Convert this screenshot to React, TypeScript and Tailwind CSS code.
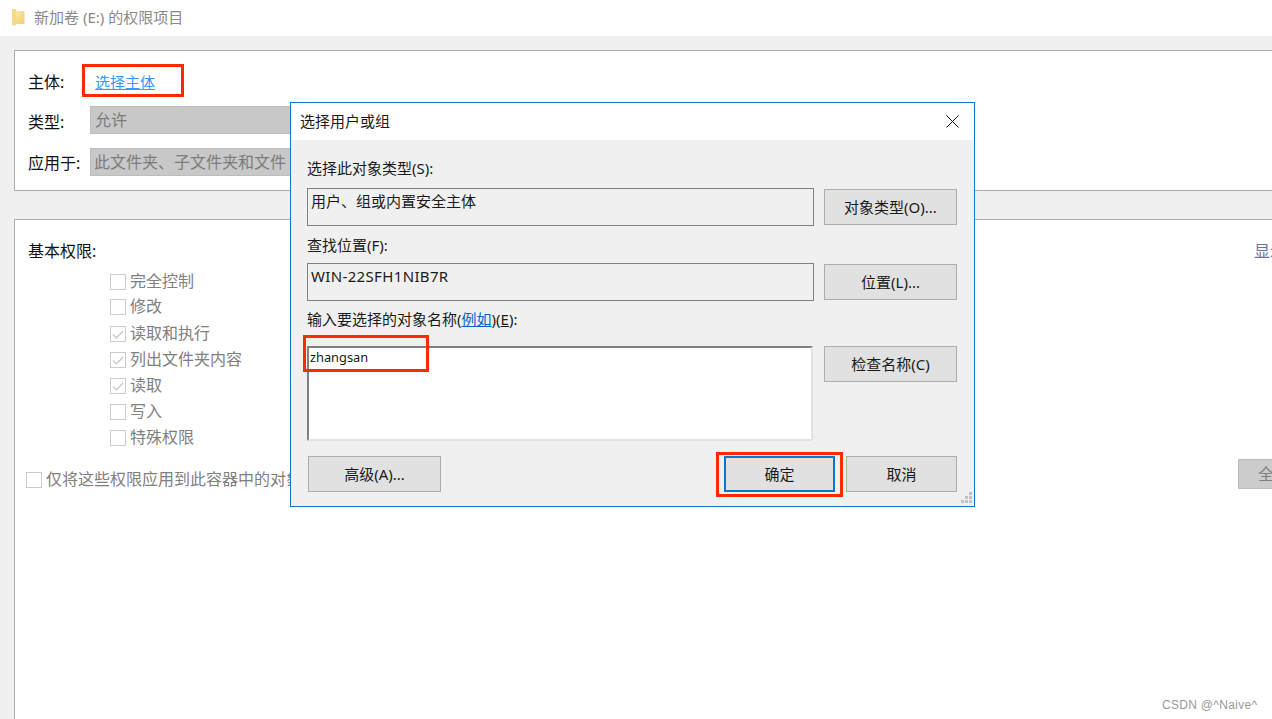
const font = { fontFamily: '"Noto Sans", "Noto Sans CJK SC", sans-serif' };

const perms = [
  { label: "完全控制", checked: false, cls: "h-[25px]" },
  { label: "修改", checked: false, cls: "h-[27px]" },
  { label: "读取和执行", checked: true, cls: "h-[26px]" },
  { label: "列出文件夹内容", checked: true, cls: "h-[26px]" },
  { label: "读取", checked: true, cls: "h-[26px]" },
  { label: "写入", checked: false, cls: "h-[26px]" },
  { label: "特殊权限", checked: false, cls: "h-[26px]" },
];

function CheckBox({ checked }: { checked?: boolean }) {
  return (
    <span className="flex h-4 w-4 shrink-0 items-center justify-center border border-[#cccccc] bg-white">
      {checked && (
        <svg width="14" height="14" viewBox="0 0 14 14" fill="none" stroke="#c4c4c4" strokeWidth="1.2">
          <polyline points="2,7.5 5.5,11 12,4" />
        </svg>
      )}
    </span>
  );
}

function Btn({ children, className = "border border-[#adadad]" }: { children: React.ReactNode; className?: string }) {
  return (
    <button className={`flex h-9 shrink-0 items-center justify-center bg-[#e1e1e1] text-[15px] text-[#1a1a1a] ${className}`}>
      {children}
    </button>
  );
}

function FolderIcon() {
  return (
    <svg width="14" height="18" viewBox="0 0 14 18">
      <defs>
        <linearGradient id="fold" x1="0" y1="0" x2="1" y2="1">
          <stop offset="0" stopColor="#fdeeb8" />
          <stop offset="1" stopColor="#f0cb6a" />
        </linearGradient>
      </defs>
      <path d="M1 1h4.500v2H12.500q1 0 1 1v11q0 1-1 1H5l-1 1.500H2.500L1 16z" fill="url(#fold)" />
      <path d="M1 1h4v15.500L3 17.500 1 16z" fill="#f7d98a" />
    </svg>
  );
}

function Dialog() {
  return (
    <div className="absolute left-[290px] top-[102px] flex h-[405px] w-[685px] flex-col border border-[#0a7ad6] bg-[#f0f0f0] text-[15px] text-[#1a1a1a]">
      <div className="flex h-[37px] shrink-0 items-center justify-between bg-white pl-[9px] pr-[15px]">
        <span>选择用户或组</span>
        <svg width="13" height="13" viewBox="0 0 13 13" stroke="#111" strokeWidth="1" fill="none">
          <path d="M0.500 0.500 12.500 12.500M12.500 0.500 0.500 12.500" />
        </svg>
      </div>
      <div className="relative flex flex-1 flex-col pl-[16px] pr-[17px] pt-[18px]">
        <div className="mb-[10px] h-5 leading-5">选择此对象类型(S):</div>
        <div className="flex gap-[10px]">
          <div className="h-[38px] w-[507px] border border-[#808080] pl-[3px] leading-[24px]">用户、组或内置安全主体</div>
          <Btn className="mt-px w-[133px] border border-[#adadad]">对象类型(O)...</Btn>
        </div>
        <div className="mb-[8px] mt-[9px] h-5 leading-5">查找位置(F):</div>
        <div className="flex gap-[10px]">
          <div className="h-[38px] w-[507px] border border-[#808080] pl-[3px] leading-[24px] tracking-[0.35px]">WIN-22SFH1NIB7R</div>
          <Btn className="mt-px w-[133px] border border-[#adadad]">位置(L)...</Btn>
        </div>
        <div className="mb-[17px] mt-[8px] h-5 leading-5">
          输入要选择的对象名称(<span className="text-[#0066cc] underline">例如</span>)(<span className="underline">E</span>):
        </div>
        <div className="flex gap-[11px]">
          <div className="h-[95px] w-[506px] border-b-2 border-l-2 border-r-2 border-t-2 border-b-[#e3e3e3] border-l-[#808080] border-r-[#e3e3e3] border-t-[#808080] bg-white pl-px text-[12.800px] leading-[18px]">
            zhangsan
          </div>
          <Btn className="w-[133px] border border-[#adadad]">检查名称(C)</Btn>
        </div>
        <div className="ml-px mt-[15px] flex gap-[11px]">
          <Btn className="w-[133px] border border-[#adadad]">高级(A)...</Btn>
          <Btn className="ml-auto w-[111px] border-2 border-[#0078d7]">确定</Btn>
          <Btn className="w-[111px] border border-[#adadad]">取消</Btn>
        </div>
        <svg className="absolute bottom-[1px] right-[1px]" width="13" height="13" viewBox="0 0 13 13" fill="#c2c2c2">
          <rect x="9" y="0" width="3" height="3" />
          <rect x="5" y="4" width="3" height="3" />
          <rect x="9" y="4" width="3" height="3" />
          <rect x="1" y="8" width="3" height="3" />
          <rect x="5" y="8" width="3" height="3" />
          <rect x="9" y="8" width="3" height="3" />
        </svg>
      </div>
    </div>
  );
}

export default function App() {
  return (
    <div className="relative h-[719px] w-[1272px] overflow-hidden bg-[#f0f0f0] text-[16px]" style={font}>
      <div className="flex h-9 items-center bg-white pb-[2px] pl-[11px]">
        <FolderIcon />
        <span className="ml-[9px] text-[15px] text-[#8a8a8a]">新加卷 (E:) 的权限项目</span>
      </div>

      <div className="ml-[14px] mt-[14px] h-[141px] w-[1400px] border border-[#adadad] bg-white pl-[13px] pt-[20px] text-[#111]">
        <div className="flex h-[22px] items-center">
          <span className="w-[67px]">主体:</span>
          <span className="text-[15px] text-[#3a96ff] underline">选择主体</span>
        </div>
        <div className="mt-[13px] flex h-[28px] items-center">
          <span className="mt-[3px] w-[62px]">类型:</span>
          <div className="flex h-[28px] w-[300px] items-center border border-[#bdbdbd] bg-[#c8c8c8] pl-[4px] text-[#7c7c7c]">允许</div>
        </div>
        <div className="mt-[14px] flex h-[28px] items-center">
          <span className="mt-[2px] w-[62px]">应用于:</span>
          <div className="flex h-[28px] w-[300px] items-center border border-[#bdbdbd] bg-[#c8c8c8] pl-[3px] text-[#7c7c7c]">此文件夹、子文件夹和文件</div>
        </div>
      </div>

      <div className="ml-[14px] mt-[28px] h-[520px] w-[1400px] border border-[#adadad] bg-white pt-[21px]">
        <div className="flex h-5 items-center pl-[13px] text-[#111]">
          <span className="w-[1226px] shrink-0">基本权限:</span>
          <span className="whitespace-nowrap text-[#6f6fa0]">显示高级权限</span>
        </div>
        <div className="mt-[13px] flex flex-col pl-[95px] text-[#808080]">
          {perms.map((p) => (
            <div key={p.label} className={`flex items-start gap-[4px] ${p.cls}`}>
              <CheckBox checked={p.checked} />
              <span className="leading-[14px]">{p.label}</span>
            </div>
          ))}
        </div>
        <div className="mt-[3px] flex h-[30px] items-start pl-[11px] text-[#808080]">
          <div className="mt-[11px] flex h-5 w-[1212px] shrink-0 items-center gap-[4px]">
            <CheckBox />
            <span className="-mt-[2px] w-[244px] overflow-hidden whitespace-nowrap leading-5">仅将这些权限应用到此容器中的对象和/或容器</span>
          </div>
          <div className="flex h-[30px] w-[104px] items-center justify-center border border-[#bdbdbd] bg-[#cccccc]">全部清除</div>
        </div>
      </div>

      <Dialog />

      <div className="absolute left-[82px] top-[64px] h-[33px] w-[102px] border-[3px] border-[#ff2a00]" />
      <div className="absolute left-[303px] top-[335px] h-[37px] w-[126px] border-[3px] border-[#ff2a00]" />
      <div className="absolute left-[716px] top-[452px] h-[45px] w-[127px] border-[3px] border-[#ff2a00]" />

      <div className="absolute left-[1162px] top-[697px] text-[12px] leading-4 tracking-[0.3px] text-[#9a9a9a]" style={{ fontFamily: '"Liberation Sans", sans-serif' }}>
        CSDN @^Naive^
      </div>
    </div>
  );
}
